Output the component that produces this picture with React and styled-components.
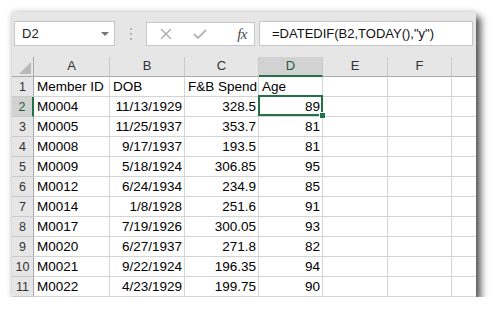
import React from "react";
import styled, { createGlobalStyle } from "styled-components";

const GlobalStyle = createGlobalStyle`
  html, body { margin: 0; padding: 0; background: #ffffff; }
  * { box-sizing: border-box; }
`;

const GREEN = "#217346";

const Window = styled.div`
  margin: 12px 0 0 12px;
  width: 464px;
  background: #e6e6e6;
  box-shadow: 5px 5px 7px rgba(0, 0, 0, 0.62), 0 0 6px rgba(0, 0, 0, 0.22);
  font-family: "Liberation Sans", Arial, sans-serif;
`;

const Toolbar = styled.div`
  display: flex;
  align-items: flex-start;
  height: 45px;
  padding: 9px 3px 0 2px;
`;

const NameBox = styled.div`
  width: 101px;
  height: 25px;
  background: #fff;
  border: 1px solid #c6c6c6;
  display: flex;
  align-items: center;
  justify-content: space-between;
  padding: 0 5px 0 7px;
  font-size: 13px;
  color: #222;
`;

const Caret = styled.span`
  width: 0;
  height: 0;
  border-left: 4px solid transparent;
  border-right: 4px solid transparent;
  border-top: 4px solid #777;
`;

const Grip = styled.div`
  width: 31px;
  height: 25px;
  display: flex;
  flex-direction: column;
  align-items: center;
  justify-content: center;
  gap: 3px;
`;

const Dot = styled.span`
  width: 2px;
  height: 2px;
  background: #b4b4b4;
`;

const ButtonBox = styled.div`
  width: 109px;
  height: 24px;
  margin-top: 1px;
  background: #fff;
  border: 1px solid #c6c6c6;
  display: flex;
  align-items: center;
  padding: 0 0 0 12px;
`;

const IconSlot = styled.div`
  width: ${(p) => p.$w}px;
  height: 22px;
  display: flex;
  align-items: center;
  justify-content: ${(p) => (p.$end ? "flex-end" : "center")};
`;

const Fx = styled.span`
  font-family: "Liberation Serif", "Times New Roman", serif;
  font-style: italic;
  font-size: 15px;
  color: #4a4a4a;
  letter-spacing: -0.5px;
`;

const FormulaBox = styled.div`
  flex: 1;
  height: 25px;
  margin-left: 4px;
  background: #fff;
  border: 1px solid #c6c6c6;
  display: flex;
  align-items: center;
  padding: 0 0 0 12px;
  font-size: 13px;
  color: #111;
`;

const Sheet = styled.div`
  display: grid;
  grid-template-columns: 22px 76px 75px 74px 64px 65px 64px 1fr;
  grid-auto-rows: 20px;
  background: #fff;
`;

const Corner = styled.div`
  background: #e6e6e6;
  border-right: 1px solid #ababab;
  border-bottom: 1px solid #ababab;
  display: flex;
  align-items: flex-end;
  justify-content: flex-end;
  padding: 0 2px 2px 0;
`;

const ColHeader = styled.div`
  background: ${(p) => (p.$selected ? "#d2d2d2" : "#e6e6e6")};
  border-right: ${(p) => (p.$last ? "none" : "1px solid #cacaca")};
  border-bottom: ${(p) => (p.$selected ? `2px solid ${GREEN}` : "1px solid #ababab")};
  text-align: center;
  font-size: 13px;
  line-height: 18px;
  color: ${(p) => (p.$selected ? "#1f5c3a" : "#333")};
`;

const RowHeader = styled.div`
  background: ${(p) => (p.$selected ? "#d2d2d2" : "#e6e6e6")};
  border-right: ${(p) => (p.$selected ? `2px solid ${GREEN}` : "1px solid #ababab")};
  border-bottom: 1px solid #cacaca;
  text-align: center;
  font-size: 12.5px;
  line-height: 18px;
  padding-top: 1px;
  color: ${(p) => (p.$selected ? "#1f5c3a" : "#333")};
`;

const Cell = styled.div`
  position: relative;
  z-index: ${(p) => (p.$active ? 2 : "auto")};
  border-right: ${(p) => (p.$last ? "none" : "1px solid #d4d4d4")};
  border-bottom: 1px solid #d4d4d4;
  padding: 1px 2px 0 3px;
  font-size: 13.5px;
  line-height: 18px;
  color: #000;
  white-space: nowrap;
  text-align: ${(p) => (p.$right ? "right" : "left")};
`;

const Selection = styled.div`
  position: absolute;
  top: -2px;
  left: -1px;
  right: -1px;
  bottom: 0;
  border: 2px solid ${GREEN};
  pointer-events: none;
`;

const Handle = styled.span`
  position: absolute;
  right: -5px;
  bottom: -5px;
  width: 7px;
  height: 7px;
  background: ${GREEN};
  border: 1px solid #fff;
`;

const columns = ["A", "B", "C", "D", "E", "F", ""];

const rows = [
  ["Member ID", "DOB", "F&B Spend", "Age"],
  ["M0004", "11/13/1929", "328.5", "89"],
  ["M0005", "11/25/1937", "353.7", "81"],
  ["M0008", "9/17/1937", "193.5", "81"],
  ["M0009", "5/18/1924", "306.85", "95"],
  ["M0012", "6/24/1934", "234.9", "85"],
  ["M0014", "1/8/1928", "251.6", "91"],
  ["M0017", "7/19/1926", "300.05", "93"],
  ["M0020", "6/27/1937", "271.8", "82"],
  ["M0021", "9/22/1924", "196.35", "94"],
  ["M0022", "4/23/1929", "199.75", "90"],
];

export default function App() {
  return (
    <>
      <GlobalStyle />
      <Window>
        <Toolbar>
          <NameBox>
            <span>D2</span>
            <Caret />
          </NameBox>
          <Grip>
            <Dot />
            <Dot />
            <Dot />
          </Grip>
          <ButtonBox>
            <IconSlot $w={14}>
              <svg width="12" height="12" viewBox="0 0 12 12">
                <path d="M1 1 L11 11 M11 1 L1 11" stroke="#a8a8a8" strokeWidth="1.2" fill="none" />
              </svg>
            </IconSlot>
            <IconSlot $w={34} $end>
              <svg width="14" height="12" viewBox="0 0 14 12">
                <path d="M1 6 L5 10 L13 2" stroke="#b4b4b4" strokeWidth="1.8" fill="none" />
              </svg>
            </IconSlot>
            <IconSlot $w={40} $end>
              <Fx>fx</Fx>
            </IconSlot>
          </ButtonBox>
          <FormulaBox>=DATEDIF(B2,TODAY(),"y")</FormulaBox>
        </Toolbar>
        <Sheet>
          <Corner>
            <svg width="12" height="12" viewBox="0 0 12 12">
              <polygon points="12,0 12,12 0,12" fill="#b9b9b9" />
            </svg>
          </Corner>
          {columns.map((c, i) => (
            <ColHeader key={i} $selected={c === "D"} $last={i === columns.length - 1}>
              {c}
            </ColHeader>
          ))}
          {rows.map((r, ri) => (
            <React.Fragment key={ri}>
              <RowHeader $selected={ri === 1}>{ri + 1}</RowHeader>
              {columns.map((c, ci) => {
                const v = r[ci] ?? "";
                const right = ri > 0 && ci > 0 && ci < 4;
                const sel = ri === 1 && ci === 3;
                return (
                  <Cell key={ci} $right={right} $active={sel} $last={ci === columns.length - 1}>
                    {v}
                    {sel && (
                      <Selection>
                        <Handle />
                      </Selection>
                    )}
                  </Cell>
                );
              })}
            </React.Fragment>
          ))}
        </Sheet>
      </Window>
    </>
  );
}
